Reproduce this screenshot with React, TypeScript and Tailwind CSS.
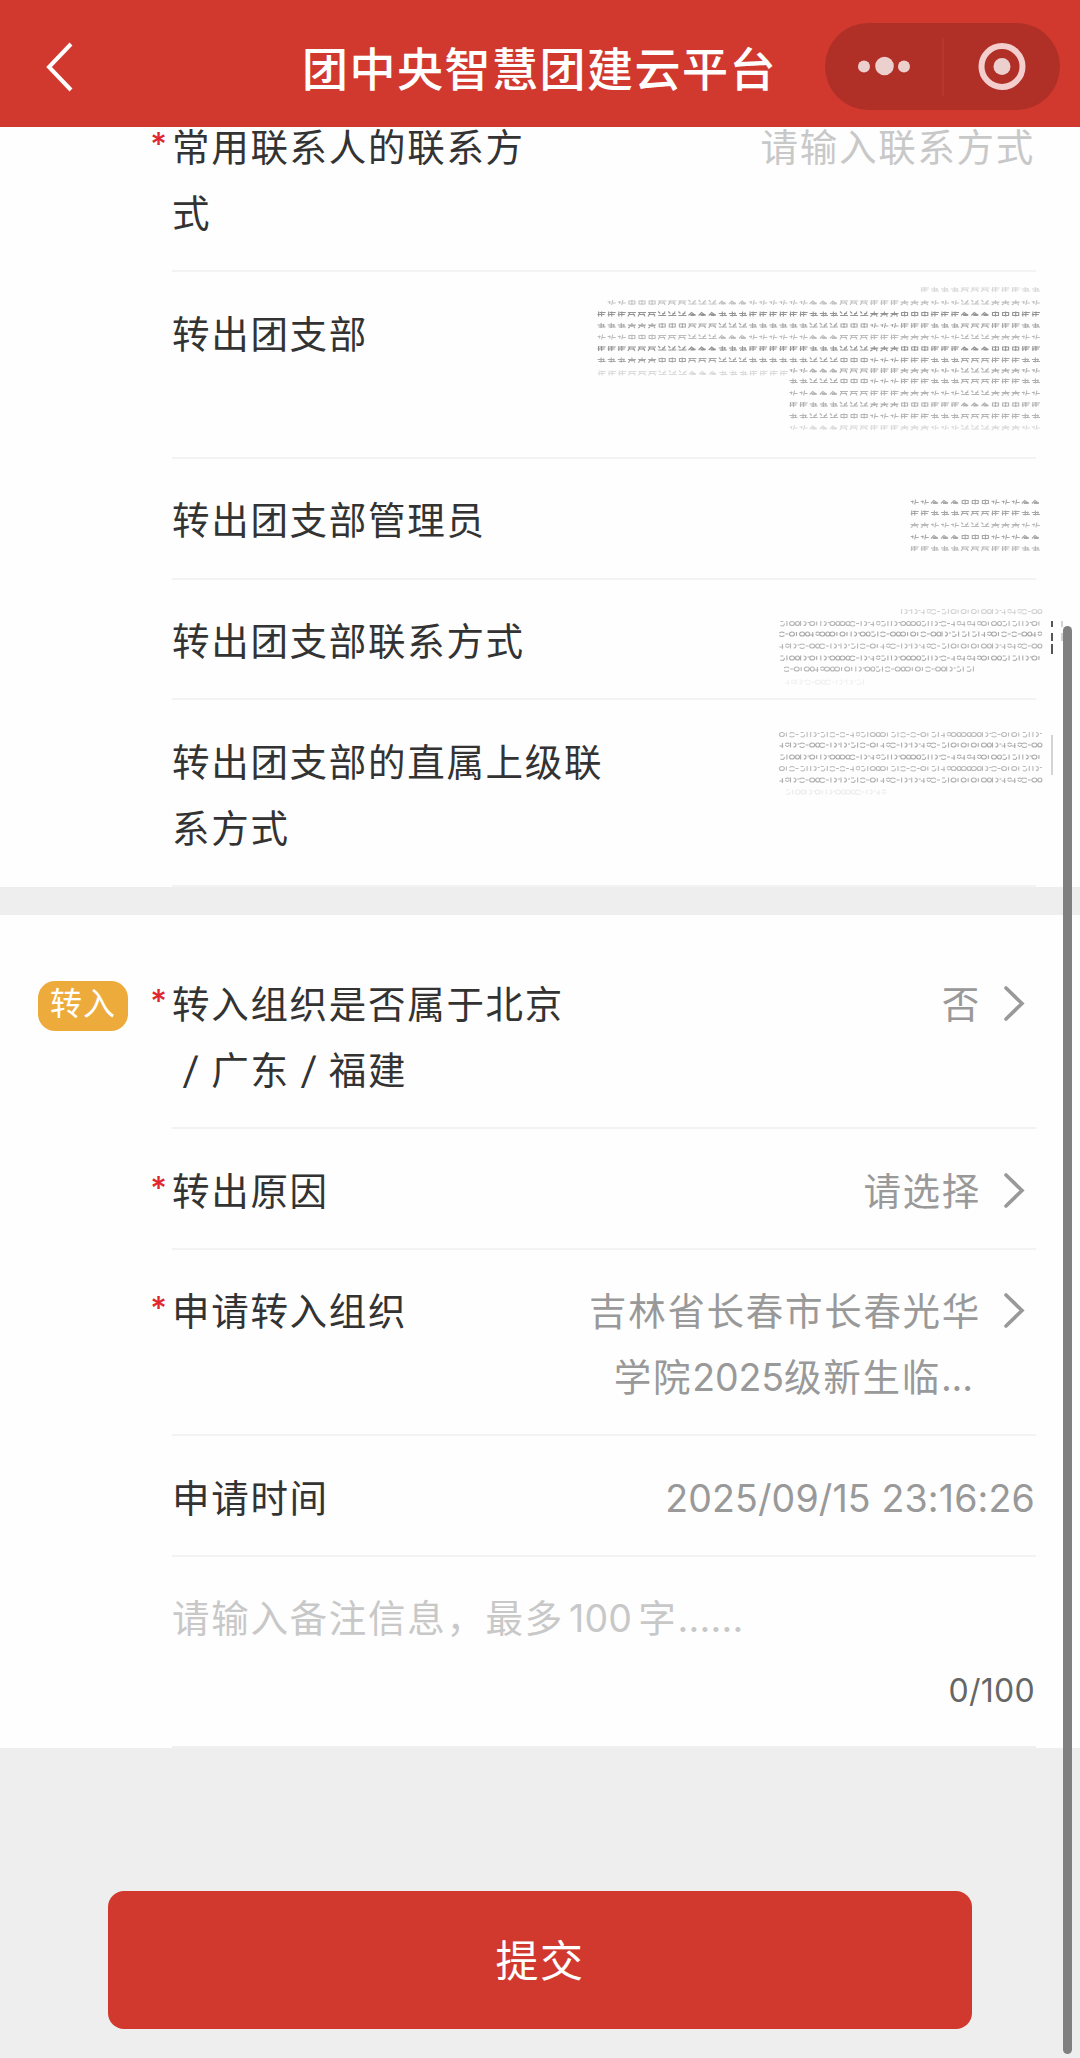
import type { ReactNode } from "react";

interface MosaicRow {
  y: number;
  from: number;
  to: number;
  opacity: number;
}

interface MosaicProps {
  rows: MosaicRow[];
  seed: number;
  digits?: boolean;
  children?: ReactNode;
}

const HAN_STROKES = [
  "M0 0h7M1 2h7M3.5 -2v5M6 -1v3",
  "M0 -1h8M2 -1l-2 4M5 0l2 3M1 1h6",
  "M1 -2v5M4 -2v5M0 1h7M2 -1h6",
  "M0 2l3 -3l4 3M2 2h4M2 1h5",
  "M1 -1h6v3h-6zM4 -2v5",
  "M0 0h3M5 -2l-1 5M4 1h4M2 -1v3",
  "M0 -2l2 2M7 -2l-3 4M0 2h8M4 0h3",
  "M0 0h8M1 1h6M4 -2v4M2 2l-2 1M6 2l1 1",
];

const DIGIT_STROKES = [
  "M1 -2.5v5M4 2q2.5 0 2.5 -2t-2.5 -2M8 -1h2",
  "M0 1.5q2.5 2 5 0M0 -1q2.5 -2 5 0M6 0h3",
  "M1 -2h3M1 2q4 1.5 4 -2M7.5 -2.5v5",
  "M0 1h4M3 -2v5M6 0q2 3 4 0M6 -1q2 -2 4 0",
  "M0 0a2.5 2 0 1 0 5 0a2.5 2 0 1 0 -5 0M7 -2v4",
  "M0 0a2.5 2 0 1 0 5 0a2.5 2 0 1 0 -5 0M6 0a2 2 0 1 0 4 0a2 2 0 1 0 -4 0",
];

const cell = 10.1;

function Mosaic({ rows, seed, digits = false, children }: MosaicProps) {
  const strokes = digits ? DIGIT_STROKES : HAN_STROKES;

  return (
    <svg
      width="440"
      height="66"
      className="-mt-[3px] -ml-20 block shrink-0 overflow-visible"
      fill="none"
      stroke="#555"
      strokeWidth="1.1"
    >
      {rows.map((row, r) => {
        const count = Math.floor((row.to - row.from) / cell);
        return (
          <g key={r} opacity={row.opacity}>
            {Array.from({ length: count }, (_, i) => {
              const x = row.to - (count - i) * cell;
              const group = Math.floor(x / cell / (digits ? 1 : 3));
              const wave = Math.floor(Math.abs(Math.sin(group * 12.9)) * 97);
              const kind = (wave + (r % 3) * 5 + seed) % strokes.length;
              return (
                <path
                  key={i}
                  d={strokes[kind]}
                  transform={`translate(${x} ${row.y})`}
                />
              );
            })}
          </g>
        );
      })}
      {children}
    </svg>
  );
}

// x is measured from the left of the 440px value column
const branchRows: MosaicRow[] = [
  { y: -10, from: 320, to: 446, opacity: 0.22 },
  { y: 3, from: 8, to: 446, opacity: 0.35 },
  { y: 14.5, from: 0, to: 446, opacity: 0.62 },
  { y: 26, from: 0, to: 446, opacity: 0.5 },
  { y: 37.5, from: 0, to: 446, opacity: 0.38 },
  { y: 49, from: 0, to: 446, opacity: 0.62 },
  { y: 60.5, from: 0, to: 446, opacity: 0.5 },
  { y: 71, from: 190, to: 446, opacity: 0.45 },
  { y: 73.5, from: 0, to: 194, opacity: 0.2 },
  { y: 81.5, from: 190, to: 446, opacity: 0.45 },
  { y: 93.5, from: 190, to: 446, opacity: 0.42 },
  { y: 105, from: 190, to: 446, opacity: 0.45 },
  { y: 116.5, from: 190, to: 446, opacity: 0.42 },
  { y: 128, from: 190, to: 446, opacity: 0.2 },
];

const managerRows: MosaicRow[] = [
  { y: 16.5, from: 314, to: 446, opacity: 0.5 },
  { y: 27.5, from: 314, to: 446, opacity: 0.5 },
  { y: 39.5, from: 314, to: 446, opacity: 0.4 },
  { y: 51.5, from: 314, to: 446, opacity: 0.5 },
  { y: 63, from: 314, to: 446, opacity: 0.4 },
];

const phoneRows: MosaicRow[] = [
  { y: 5.5, from: 300, to: 446, opacity: 0.25 },
  { y: 17.5, from: 182, to: 446, opacity: 0.42 },
  { y: 28, from: 182, to: 446, opacity: 0.5 },
  { y: 40, from: 182, to: 446, opacity: 0.42 },
  { y: 52, from: 182, to: 446, opacity: 0.48 },
  { y: 63, from: 182, to: 380, opacity: 0.42 },
  { y: 76, from: 182, to: 270, opacity: 0.08 },
];

const superiorRows: MosaicRow[] = [
  { y: 7.5, from: 182, to: 446, opacity: 0.38 },
  { y: 18, from: 182, to: 446, opacity: 0.48 },
  { y: 30, from: 182, to: 446, opacity: 0.48 },
  { y: 41.5, from: 182, to: 446, opacity: 0.4 },
  { y: 53, from: 182, to: 446, opacity: 0.45 },
  { y: 65, from: 182, to: 290, opacity: 0.1 },
];

interface RowProps {
  label: ReactNode;
  required?: boolean;
  badge?: string;
  children?: ReactNode;
}

function Row({ label, required, badge, children }: RowProps) {
  return (
    <div className="flex pr-11">
      <div className="flex w-[172px] shrink-0 items-start justify-between pt-[26.5px] pl-[38px]">
        {badge ? (
          <span className="mt-[12px] flex h-[50px] w-[90px] items-center justify-center rounded-[17px] bg-[#edab3c] pb-1 text-[32px] tracking-[1px] text-white">
            {badge}
          </span>
        ) : (
          <span />
        )}
        {required && (
          <span className="mr-[5px] font-['Inter'] text-[32px] leading-[66px] font-medium tracking-normal text-[#e0262f]">
            *
          </span>
        )}
      </div>
      <div className="flex flex-1 justify-between border-b-2 border-[#f3f3f3] pt-[29.5px] pb-[23.2px]">
        <div className="whitespace-nowrap text-[#333]">{label}</div>
        {children}
      </div>
    </div>
  );
}

function Select({ children }: { children: ReactNode }) {
  return (
    <div className="flex text-[#999]">
      <div className="text-right whitespace-nowrap">{children}</div>
      <svg
        className="mt-[13px] mr-[11px] ml-[22px] h-9 w-[22px]"
        viewBox="0 0 22 36"
        fill="none"
        stroke="#999"
        strokeWidth="3.6"
        strokeLinecap="round"
      >
        <path d="M3 3L19 18.5L3 34" />
      </svg>
    </div>
  );
}

function Slash() {
  return (
    <span className="inline-block w-[39.2px] -skew-x-6 text-center">/</span>
  );
}

function Header() {
  return (
    <header className="relative z-10 flex h-[127px] items-center bg-[#d1392f] pt-[6px] pr-5 pl-[44px]">
      <svg
        width="32"
        height="52"
        viewBox="0 0 32 52"
        fill="none"
        stroke="#fff"
        strokeWidth="4"
      >
        <path d="M27 3L5 26L27 49" />
      </svg>
      <h1 className="ml-[226px] pt-[4px] text-[46px] leading-[66px] font-medium tracking-[1.5px] whitespace-nowrap text-white">
        团中央智慧团建云平台
      </h1>
      <div className="ml-auto flex h-[87px] w-[235px] items-center rounded-full bg-[#b03028]">
        <svg width="235" height="87" viewBox="0 0 235 87">
          <g fill="#ecd0ce">
            <circle cx="39" cy="43.5" r="6" />
            <circle cx="59.5" cy="43" r="9.3" />
            <circle cx="79" cy="43.5" r="6" />
            <circle cx="177" cy="43.5" r="8.5" />
          </g>
          <path d="M118 15v58" stroke="#b93a32" strokeWidth="1.5" />
          <circle
            cx="177"
            cy="43.5"
            r="20.5"
            fill="none"
            stroke="#f3cecc"
            strokeWidth="6"
          />
        </svg>
      </div>
    </header>
  );
}

export default function App() {
  return (
    <div className="relative h-[2058px] w-[1080px] overflow-hidden bg-[#eee] font-['Inter','Noto_Sans_CJK_SC',sans-serif] text-[37.5px] leading-[66px] tracking-[1.7px]">
      <Header />

      <section className="-mt-[41.4px] bg-[#fefefe]">
        <Row
          required
          label={
            <>
              常用联系人的联系方
              <br />式
            </>
          }
        >
          <span className="mr-px text-[#c8c8c8]">请输入联系方式</span>
        </Row>
        <Row
          label={
            <>
              转出团支部
              <br />
              &nbsp;
            </>
          }
        >
          <Mosaic rows={branchRows} seed={0} />
        </Row>
        <Row label="转出团支部管理员">
          <Mosaic rows={managerRows} seed={3} />
        </Row>
        <Row label="转出团支部联系方式">
          <Mosaic rows={phoneRows} seed={1} digits>
            <path d="M456 15v6M456 27v8M456 38v10" strokeWidth="2" />
            <path d="M466 15v6M466 27v8" strokeWidth="1" opacity="0.5" />
          </Mosaic>
        </Row>
        <Row
          label={
            <>
              转出团支部的直属上级联
              <br />
              系方式
            </>
          }
        >
          <Mosaic rows={superiorRows} seed={2} digits>
            <path d="M456 8v40" opacity="0.45" />
          </Mosaic>
        </Row>
      </section>

      <section className="mt-[27.7px] bg-[#fefefe] pt-[27.6px]">
        <Row
          badge="转入"
          required
          label={
            <>
              转入组织是否属于北京
              <br />
              <Slash />
              广东
              <Slash />
              福建
            </>
          }
        >
          <Select>否</Select>
        </Row>
        <Row required label="转出原因">
          <Select>请选择</Select>
        </Row>
        <Row required label="申请转入组织">
          <Select>
            吉林省长春市长春光华
            <br />
            学院<span className="tracking-[-0.1px]">2025</span>级新生临
            <span className="mr-[8px] tracking-[-0.1px]">...</span>
          </Select>
        </Row>
        <Row label="申请时间">
          <span className="mr-px tracking-[0.15px] text-[#999]">
            2025/09/15 23:16:26
          </span>
        </Row>
        <div className="mr-11 ml-[172px] flex h-[191px] flex-col border-b-2 border-[#f0f0f0] pt-[28.5px]">
          <span className="text-[#c8c8c8]">
            请输入备注信息，最多
            <span className="mr-[6px] ml-[5px] tracking-[0.2px]">100</span>字
            <span className="tracking-[0.2px]">......</span>
          </span>
          <span className="mt-1.5 mr-px self-end text-[32px] tracking-[0.3px] text-[#666]">
            0/100
          </span>
        </div>
      </section>

      <button className="mt-[143px] ml-[108px] flex h-[138px] w-[864px] items-center justify-center rounded-2xl bg-[#d1392f] pt-[2px] text-[43px] tracking-[1.5px] text-white">
        提交
      </button>

      {/* scrollbar */}
      <div className="absolute top-[626px] left-[1063px] h-[1428px] w-[9px] rounded-full bg-[#808080]" />
    </div>
  );
}
